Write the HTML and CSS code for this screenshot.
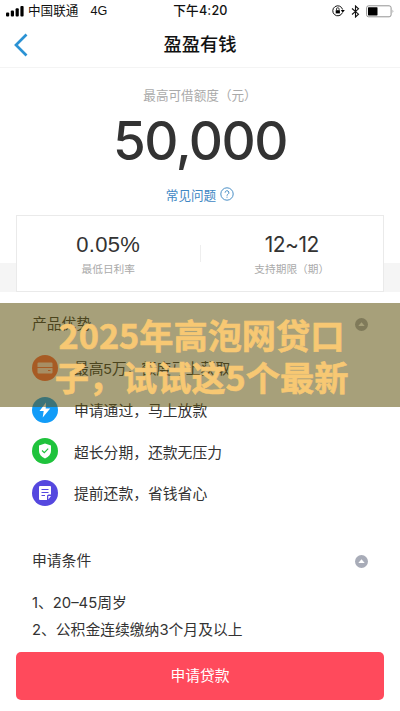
FILE: index.html
```html
<!DOCTYPE html>
<html lang="zh-CN">
<head>
<meta charset="utf-8">
<title>盈盈有钱</title>
<link rel="stylesheet" href="styles.css">
</head>
<body>
<main class="screen">
  <header class="status">
    <div class="carrier">
      <svg class="signal" width="18" height="12" viewBox="0 0 18 12"><rect y="7.5" width="3.2" height="4" rx="1"/><rect x="4.8" y="5.5" width="3.2" height="6" rx="1"/><rect x="9.6" y="3.2" width="3.2" height="8.3" rx="1"/><rect x="14.4" y="1" width="3.2" height="10.5" rx="1"/></svg>
      <span>中国联通</span><span class="network">4G</span>
    </div>
    <span class="time">下午4:20</span>
    <div class="indicators">
      <svg width="13" height="12" viewBox="0 0 13 12"><path d="M10.4 7.7a5 5 0 1 1 .2-3.2" fill="none" stroke="#111"/><path d="M8.8 5h4l-2 2.7z"/><rect x="3.7" y="5.2" width="4.2" height="3.2"/><path d="M4.5 5V4a1.3 1.3 0 0 1 2.6 0v1" fill="none" stroke="#111" stroke-width=".8"/></svg>
      <svg width="9" height="13" viewBox="0 0 9 13"><path d="m1 3.5 6.5 5.7-3 2.8V1l3 2.8L1 9.5" fill="none" stroke="#111" stroke-width="1.1"/></svg>
      <svg width="29" height="13" viewBox="0 0 29 13"><rect x=".6" y=".8" width="24.5" height="11" rx="2" fill="none" stroke="#888" stroke-width=".9"/><rect x="2" y="2.2" width="9.5" height="8.2" rx=".6"/><path d="M26.6 4.5q1.6 1.8 0 3.6z" fill="#888"/></svg>
    </div>
  </header>
  <nav class="nav">
    <svg width="14" height="24" viewBox="0 0 14 24"><path d="M12.5 1.5 2 12l10.500 10.500" fill="none" stroke="#2b92d4" stroke-width="2.7"/></svg>
    <h1>盈盈有钱</h1>
  </nav>
  <section class="hero">
    <p class="hero-label">最高可借额度（元）</p>
    <p class="amount">50,000</p>
    <p class="faq"><span>常见问题</span><svg width="14" height="14" viewBox="0 0 14 14" fill="none" stroke="#4a8fc6"><circle cx="7" cy="7" r="6.2"/><path d="M5.100 5.700a1.900 1.900 0 1 1 2.800 1.600Q7 7.700 7 8.700M7 9.700v1"/></svg></p>
  </section>
  <section class="rate-area">
    <div class="rate-card">
      <div class="rate"><strong>0.05%</strong><span>最低日利率</span></div>
      <i class="divider"></i>
      <div class="rate"><strong>12~12</strong><span>支持期限（期）</span></div>
    </div>
  </section>
  <section class="benefits">
    <div class="section-head"><h2>产品优势</h2><svg width="13" height="13" viewBox="0 0 13 13"><circle cx="6.500" cy="6.500" r="6.500" fill="#a8acb8"/><path d="M3.300 8 6.500 4.200 9.700 8z" fill="#fff"/></svg></div>
    <ul>
      <li><svg width="26" height="26" viewBox="0 0 26 26"><circle cx="13" cy="13" r="13" fill="#ff6640"/><path d="M6.500 7.500h13q1 0 1 1V12h-15V8.500q0-1 1-1zM5.500 13h15v4.500q0 1-1 1h-13q-1 0-1-1z" fill="#fff" fill-opacity=".75"/><path d="M16 15.500h2.500" stroke="#ff6640"/></svg><span>最高5万，额度马上获取</span></li>
      <li><svg width="26" height="26" viewBox="0 0 26 26"><circle cx="13" cy="13" r="13" fill="#129cf8"/><path d="M14 5.500 7.500 14h4.200l-1 6.500 7.500-9h-4.500z" fill="#fff"/></svg><span>申请通过，马上放款</span></li>
      <li><svg width="26" height="26" viewBox="0 0 26 26"><circle cx="13" cy="13" r="13" fill="#1fc33c"/><path d="m13 5.500 6 2V13q0 4.700-6 7.500-6-2.800-6-7.500V7.500z" fill="#fff"/><path d="m10 12.500 2.300 2.200 3.900-4" fill="none" stroke="#1fc33c" stroke-width="1.200"/></svg><span>超长分期，还款无压力</span></li>
      <li><svg width="26" height="26" viewBox="0 0 26 26"><circle cx="13" cy="13" r="13" fill="#5548df"/><path d="M8 6h10q1 0 1 1v7.500h-2.500q-1.500 0-1.500 1.500v4H8q-1 0-1-1V7q0-1 1-1zM16.300 16H19l-2.700 3.600z" fill="#fff"/><path d="M9.500 9.500h7M9.500 12.500h7M9.500 15.500h3.500" stroke="#5548df" stroke-width="1.100"/></svg><span>提前还款，省钱省心</span></li>
    </ul>
  </section>
  <section class="conditions">
    <div class="section-head"><h2>申请条件</h2><svg width="13" height="13" viewBox="0 0 13 13"><circle cx="6.500" cy="6.500" r="6.500" fill="#a8acb8"/><path d="M3.300 8 6.500 4.200 9.700 8z" fill="#fff"/></svg></div>
    <p>1、20–45周岁</p>
    <p>2、公积金连续缴纳3个月及以上</p>
  </section>
  <button class="apply">申请贷款</button>
  <div class="banner"><span>2025年高泡网贷口</span><span>子，试试这5个最新</span></div>
</main>
</body>
</html>
```
FILE: styles.css
```css
* { box-sizing: border-box; margin: 0; padding: 0; }
body { background: #fff; font-family: "Liberation Sans", "Noto Sans CJK SC", sans-serif; color: #333; }
svg { display: block; flex: none; }
.screen { position: relative; width: 400px; height: 711px; overflow: hidden; background: #fff; }
.status { display: grid; grid-template-columns: 1fr auto 1fr; align-items: center; height: 22px; padding: 0 5px 0 6px; font-size: 12.6px; line-height: 22px; color: #111; }
.carrier { display: flex; align-items: center; }
.signal { margin-right: 4px; }
.network { margin-left: 12px; }
.time { font-family: Inter, "Noto Sans CJK SC", sans-serif; font-size: 12.6px; font-weight: 500; letter-spacing: .2px; }
.indicators { display: flex; align-items: center; justify-content: flex-end; gap: 6px; }
.nav { display: grid; grid-template-columns: 14px 1fr 14px; align-items: center; height: 46px; padding: 0 14px; border-bottom: 1px solid #f4f4f4; }
.nav h1 { text-align: center; font-size: 18.3px; line-height: 46px; font-weight: 500; color: #111; }
.hero { height: 147px; padding-top: 18px; text-align: center; }
.hero-label { height: 20px; line-height: 20px; font-size: 12.6px; color: #aaa; }
.amount { height: 72px; line-height: 71px; font-family: Inter, sans-serif; font-size: 53px; font-weight: 500; letter-spacing: -1.5px; color: #333; }
.faq { display: flex; justify-content: center; align-items: center; gap: 4px; height: 20px; margin-top: 6px; font-size: 12.6px; color: #3f87c3; }
.rate-area { height: 77px; padding: 0 16px; background: linear-gradient(#fff 48px, #f5f5f5 48px); }
.rate-card { display: grid; grid-template-columns: 1fr 1px 1fr; align-items: center; height: 77px; background: #fff; border: 1px solid #eaeaea; }
.rate { display: flex; flex-direction: column; align-items: center; }
.rate strong { font-size: 22px; line-height: 30px; font-weight: 400; letter-spacing: .3px; }
.rate:last-child strong { font-family: Inter, sans-serif; font-size: 21px; letter-spacing: -.5px; }
.rate span { font-size: 10.7px; line-height: 18px; color: #aaa; }
.divider { height: 17px; background: #eee; }
.benefits { height: 252px; padding: 20px 32px 0; }
.section-head { display: flex; justify-content: space-between; align-items: center; height: 24px; }
.section-head h2 { font-size: 14.8px; line-height: 24px; font-weight: 400; }
.benefits ul { list-style: none; padding-top: 11px; }
.benefits li { display: flex; align-items: center; gap: 16px; height: 41.7px; font-size: 14.8px; }
.conditions { height: 108px; padding: 5px 32px 0; }
.conditions .section-head { margin-bottom: 17px; }
.conditions p { height: 26.5px; line-height: 26px; font-family: Inter, "Noto Sans CJK SC", sans-serif; font-size: 14.8px; }
.apply { display: block; width: 368px; height: 48px; margin: 0 auto; border: 0; border-radius: 5px; background: #ff4a5c; color: #fff; font: 14.8px/48px "Liberation Sans", "Noto Sans CJK SC", sans-serif; }
.banner { position: absolute; top: 303px; left: 0; width: 400px; height: 104px; padding: 10px 0 0 3px; display: flex; flex-direction: column; align-items: center; background: rgba(95, 82, 13, .55); color: #f7c873; font-family: "Noto Sans CJK SC", sans-serif; font-size: 34.2px; line-height: 42px; font-weight: 700; white-space: nowrap; -webkit-text-stroke: .6px #f7c873; }
```
